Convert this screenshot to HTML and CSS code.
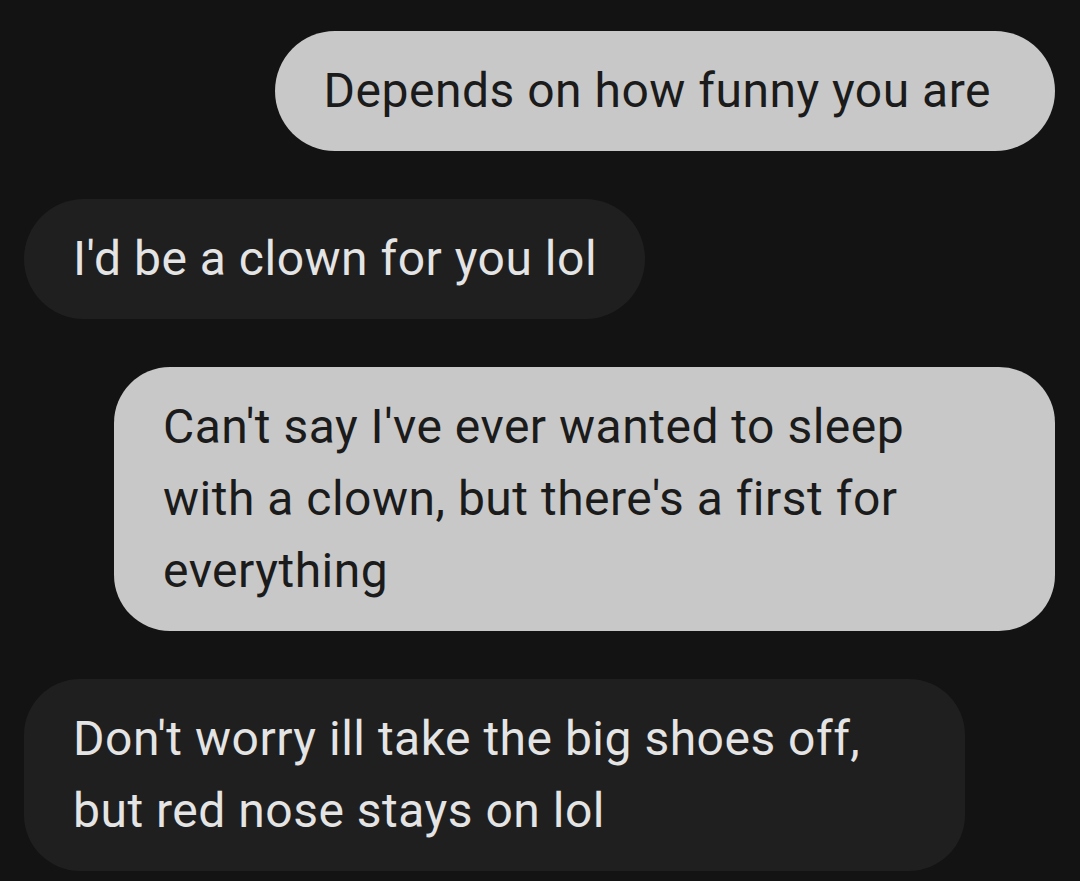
FILE: index.html
```html
<!DOCTYPE html>
<html>
<head>
<meta charset="utf-8">
<link rel="stylesheet" href="styles.css">
</head>
<body>
<main class="thread">
  <div class="msg out first"><span class="txt">Depends on how funny you are</span></div>
  <div class="msg in"><span class="txt">I'd be a clown for you lol</span></div>
  <div class="msg out multi"><span class="txt">Can't say I've ever wanted to sleep with a clown, but there's a first for everything</span></div>
  <div class="msg in multi"><span class="txt">Don't worry ill take the big shoes off, but red nose stays on lol</span></div>
</main>
</body>
</html>
```

FILE: styles.css
```css
html, body {
  margin: 0;
  padding: 0;
  background: #131313;
  height: 100%;
  overflow: hidden;
}

.thread {
  display: flex;
  flex-direction: column;
  gap: 48px;
  padding: 31px 25px 0 24px;
  font-family: Roboto, "Noto Sans", sans-serif;
  font-size: 48px;
  line-height: 72px;
  letter-spacing: 0.5px;
}

.msg {
  box-sizing: border-box;
  max-width: 941px;
  padding: 24px 48px 24px 49px;
  border-radius: 60px;
}

.msg.first {
  padding-right: 64px;
}

.msg.multi {
  border-radius: 56px;
}

.out {
  align-self: flex-end;
  background: #c8c8c8;
  color: #1b1b1b;
}

.in {
  align-self: flex-start;
  background: #1f1f1f;
  color: #e4e4e4;
}
```
